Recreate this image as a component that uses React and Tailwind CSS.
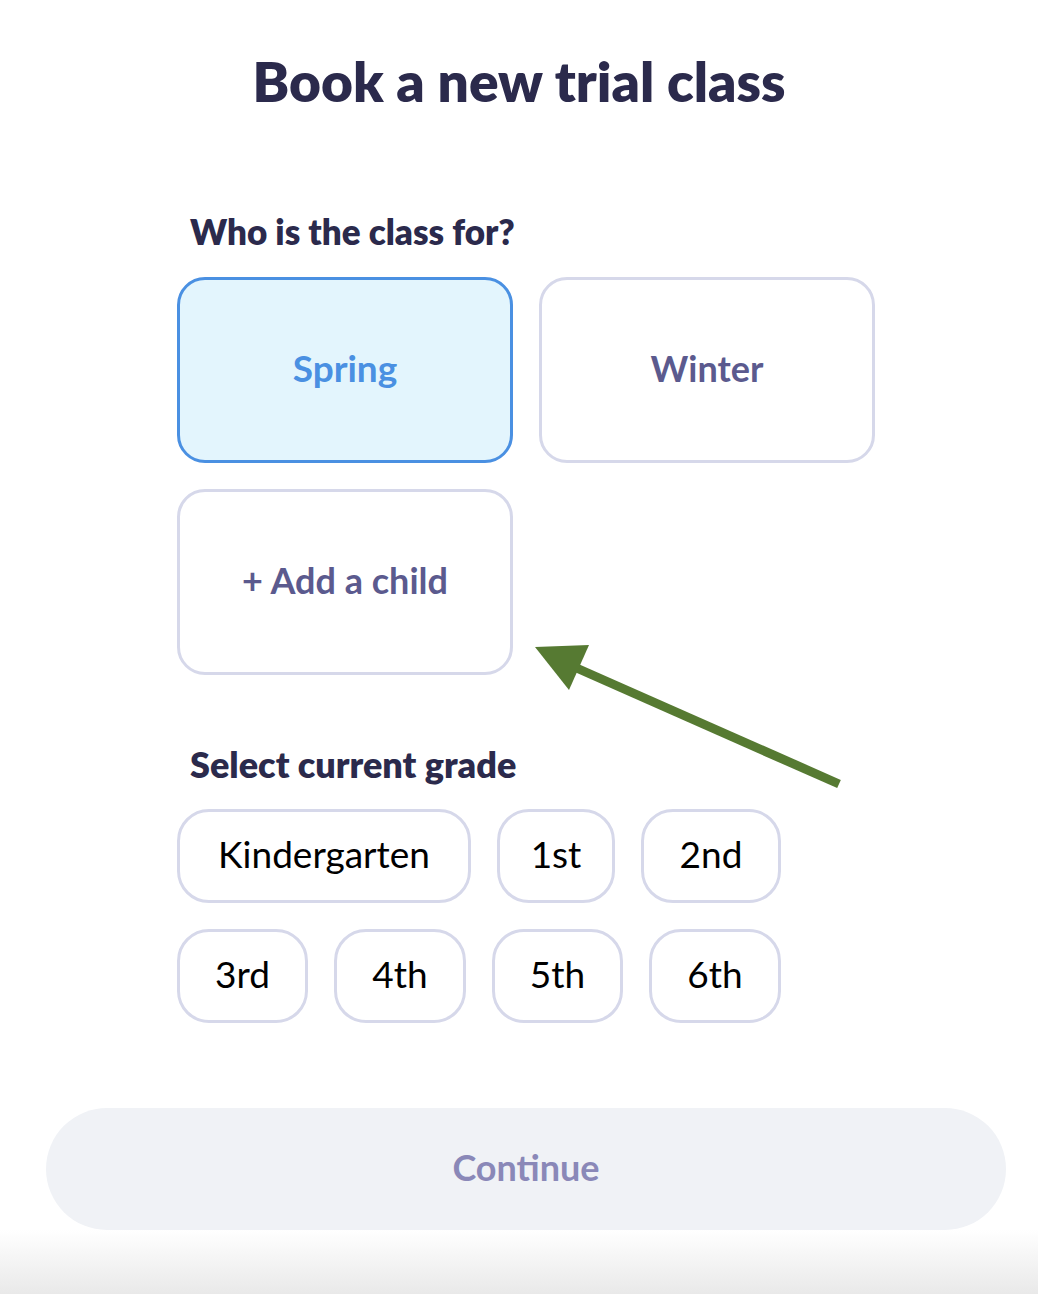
import React from "react";

const grades1 = [
  { t: "Kindergarten", w: "w-[294px]" },
  { t: "1st", w: "w-[118px]" },
  { t: "2nd", w: "w-[140px]" },
];
const grades2 = [
  { t: "3rd", w: "w-[131px]" },
  { t: "4th", w: "w-[132px]" },
  { t: "5th", w: "w-[131px]" },
  { t: "6th", w: "w-[132px]" },
];

function Pill({ t, w }) {
  return (
    <div
      className={`${w} h-[94px] flex items-center justify-center rounded-[32px] border-[3px] border-[#d6d8ea] bg-white text-[37px] leading-none text-black pb-[6px]`}
    >
      {t}
    </div>
  );
}

export default function App() {
  return (
    <div
      className="relative w-[1038px] h-[1294px] bg-white overflow-hidden flex flex-col"
      style={{ fontFamily: "Lato, 'Open Sans', sans-serif" }}
    >
      <h1 className="mt-[54px] text-center text-[55px] leading-none font-extrabold text-[#2b2a4c]">
        Book a new trial class
      </h1>

      <div className="pl-[177px] flex flex-col">
        <h2 className="mt-[105px] ml-[13px] text-[35px] leading-none font-extrabold text-[#2b2a4c]">
          Who is the class for?
        </h2>

        <div className="mt-[28px] grid grid-cols-[336px_336px] gap-[26px]">
          <div className="h-[186px] rounded-[28px] border-[3px] border-[#4a90e2] bg-[#e3f5fd] flex items-center justify-center pb-[4px] text-[37px] font-bold text-[#4a90e2]">
            Spring
          </div>
          <div className="h-[186px] rounded-[28px] border-[3px] border-[#d6d8ea] bg-white flex items-center justify-center pb-[4px] text-[36px] font-bold text-[#5b5a8e]">
            Winter
          </div>
          <div className="h-[186px] rounded-[28px] border-[3px] border-[#d6d8ea] bg-white flex items-center justify-center pb-[4px] text-[36px] font-bold text-[#5b5a8e]">
            + Add a child
          </div>
        </div>

        <h2 className="mt-[71px] ml-[13px] text-[36px] leading-none font-extrabold text-[#2b2a4c]">
          Select current grade
        </h2>

        <div className="mt-[27px] flex gap-[26px]">
          {grades1.map((g) => (
            <Pill key={g.t} {...g} />
          ))}
        </div>
        <div className="mt-[26px] flex gap-[26px]">
          {grades2.map((g) => (
            <Pill key={g.t} {...g} />
          ))}
        </div>
      </div>

      <div className="mt-[85px] ml-[46px] w-[960px] h-[122px] rounded-full bg-[#f0f2f6] flex items-center justify-center pb-[4px] text-[36px] font-bold text-[#8a88b8]">
        Continue
      </div>

      <div className="flex-1 bg-gradient-to-b from-white to-[#e9e9e9]" />

      <svg
        className="absolute left-0 top-0 pointer-events-none"
        width="1038"
        height="1294"
        viewBox="0 0 1038 1294"
      >
        <line x1="839" y1="784" x2="572" y2="666" stroke="#567a32" strokeWidth="9" />
        <polygon points="535,647 589,645 569,690" fill="#567a32" />
      </svg>
    </div>
  );
}
